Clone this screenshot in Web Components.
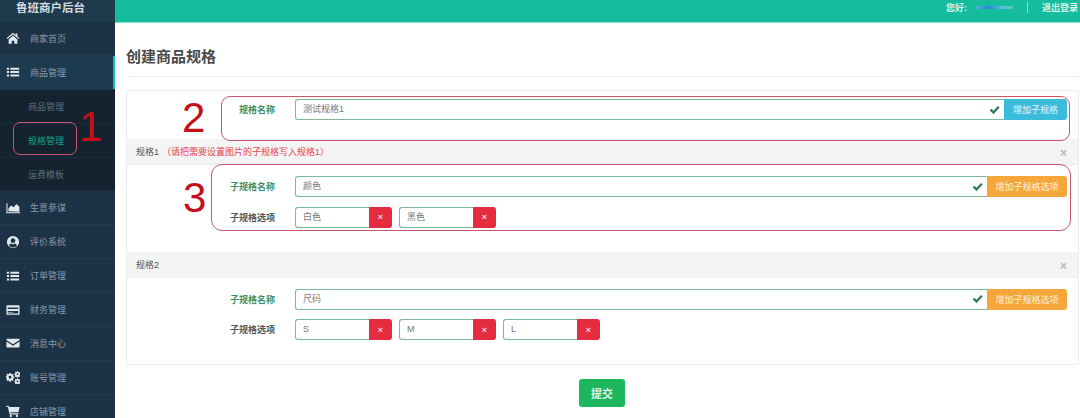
<!DOCTYPE html>
<html lang="zh">
<head>
<meta charset="utf-8">
<title>创建商品规格</title>
<style>
  html, body { margin: 0; height: 418px; overflow: hidden; background: #fff; }
  body { font-family: "Liberation Sans", "Noto Sans CJK SC", sans-serif; font-size: 9px; color: #555; }
</style>
</head>
<body>
<shop-page>
  <side-nav slot="nav" brand="鲁班商户后台">
    <nav-item icon="home">商家首页</nav-item>
    <nav-item icon="list" current>商品管理</nav-item>
    <nav-item sub>商品管理</nav-item>
    <nav-item sub active>规格管理</nav-item>
    <nav-item sub>运费模板</nav-item>
    <nav-item icon="chart">生意参谋</nav-item>
    <nav-item icon="user">评价系统</nav-item>
    <nav-item icon="list">订单管理</nav-item>
    <nav-item icon="card">财务管理</nav-item>
    <nav-item icon="mail">消息中心</nav-item>
    <nav-item icon="cogs">账号管理</nav-item>
    <nav-item icon="cart">店铺管理</nav-item>
  </side-nav>
  <top-bar slot="top"></top-bar>
  <spec-form>
    <spec-section>
      <spec-row label="规格名称" valid>
        <spec-field valid action="增加子规格" tone="blue">测试规格1</spec-field>
      </spec-row>
    </spec-section>
    <spec-section heading="规格1" note="（请把需要设置图片的子规格写入规格1）" closable>
      <spec-row label="子规格名称" valid>
        <spec-field valid action="增加子规格选项" tone="orange">颜色</spec-field>
      </spec-row>
      <spec-row label="子规格选项">
        <spec-option>白色</spec-option>
        <spec-option>黑色</spec-option>
      </spec-row>
    </spec-section>
    <spec-section heading="规格2" closable>
      <spec-row label="子规格名称" valid>
        <spec-field valid action="增加子规格选项" tone="orange">尺码</spec-field>
      </spec-row>
      <spec-row label="子规格选项">
        <spec-option>S</spec-option>
        <spec-option>M</spec-option>
        <spec-option>L</spec-option>
      </spec-row>
    </spec-section>
  </spec-form>
  <call-out slot="notes" n="1" style="--x:13px;--y:122px;--w:64px;--h:33px;--r:7px;--nx:79px;--ny:104px"></call-out>
  <call-out slot="notes" n="2" style="--x:221px;--y:96px;--w:849px;--h:45px;--r:9px;--nx:182px;--ny:95px"></call-out>
  <call-out slot="notes" n="3" style="--x:211px;--y:164px;--w:860px;--h:67px;--r:11px;--nx:183px;--ny:175px"></call-out>
</shop-page>

<script>
// fa-ish icon shapes, 16x16 box
const ICONS = {
  home: '<path d="M8 2 .6 8.2l.9 1L8 3.9l6.5 5.3.9-1L13 6.200V2.800h-2v1.700zM3 9.600V14.500h3.500v-3.500h3v3.500H13V9.600L8 5.500z"/>',
  list: '<path d="M1 3h2.500v2.300H1zM5 3h10v2.300H5zM1 6.900h2.500v2.300H1zM5 6.900h10v2.300H5zM1 10.800h2.500v2.300H1zM5 10.800h10v2.300H5z"/>',
  chart: '<path d="M.5 2.500h1.200v10.300H16V14H.5zM2.800 11.800V8.500l3-3.500 3 2 3-3.500 3.500 3v5.800z"/>',
  user: '<path fill-rule="evenodd" d="M8 1a7 7 0 1 1 0 14A7 7 0 0 1 8 1zm0 2.800a2.700 2.700 0 1 0 0 5.400 2.700 2.700 0 0 0 0-5.400zM3.500 12.200a6 6 0 0 0 9 0c-.4-1.400-1.200-2.300-2.300-2.500a3.600 3.600 0 0 1-4.400 0c-1.100.2-1.900 1.100-2.300 2.500z"/>',
  card: '<path fill-rule="evenodd" d="M1.500 2.500h13c.6 0 1 .4 1 1v9c0 .6-.4 1-1 1h-13c-.6 0-1-.4-1-1v-9c0-.6.4-1 1-1zM2 5v1.800h12V5zm0 4.200v2.800h12V9.200zm.8 1.300h2.400v.8H2.800zm3.200 0h1.600v.8H6z"/>',
  mail: '<path d="M1.300 3h13.400c.5 0 .8.300.8.800v.7L8 9.300.5 4.500v-.7c0-.5.300-.8.800-.8zM.5 6.200 8 11l7.500-4.800v6c0 .5-.3.800-.8.800H1.300c-.5 0-.8-.3-.8-.8z"/>',
  cogs: '<path fill-rule="evenodd" d="M5.600 4.500l1 .4.9-.7 1.200 1.200-.7.900.4 1 1.100.2v1.700l-1.100.2-.4 1 .7.900-1.200 1.200-.9-.7-1 .4-.2 1.100H3.700l-.2-1.100-1-.4-.9.700L.4 11.200l.7-.9-.4-1L-.4 9.100V7.400l1.100-.2.4-1-.7-.9 1.200-1.200.9.700 1-.4.2-1.100h1.700zM4.600 6.700a1.600 1.600 0 1 0 0 3.200 1.600 1.600 0 0 0 0-3.200zM12.600 1.500h1.100l.2.800.7.300.7-.4.700.8-.4.700.2.700.8.200v1.100l-.8.2-.2.700.4.700-.7.800-.7-.4-.7.300-.2.800h-1.100l-.2-.8-.7-.3-.7.400-.8-.8.400-.7-.3-.7-.8-.2V4.400l.8-.2.3-.7-.4-.7.8-.8.700.4.7-.3zm.5 2.300a1 1 0 1 0 0 2 1 1 0 0 0 0-2zM12.600 9.600h1.100l.2.800.7.300.7-.4.700.8-.4.700.2.700.8.200v1.100l-.8.2-.2.700.4.700-.7.800-.7-.4-.7.300-.2.800h-1.100l-.2-.8-.7-.3-.7.400-.8-.8.400-.7-.3-.7-.8-.2v-1.100l.8-.2.3-.7-.4-.7.8-.8.700.4.7-.3zm.5 2.300a1 1 0 1 0 0 2 1 1 0 0 0 0-2z"/>',
  cart: '<path d="M.5 2h2.600l.4 1.500H15.500l-1.300 6H5l.3 1.200h8.900V12H4.100L2.200 3.300H.5z"/><circle cx="5.500" cy="13.700" r="1.300"/><circle cx="12.500" cy="13.700" r="1.300"/>',
};

class ShopPage extends HTMLElement {
  constructor () {
    super();
    this.attachShadow({mode: 'open'}).innerHTML = `
      <style>
        :host { display: grid; grid-template-columns: 115px 1fr; grid-template-rows: 23px 1fr; width: 1080px; height: 418px; overflow: hidden; position: relative; }
        .nav { grid-row: 1 / 3; }
        .title { margin: 0 1px 0 11px; height: 54px; border-bottom: 1px solid #f0f0f0; display: flex; align-items: center; padding-top: 14px; box-sizing: border-box; font-size: 15px; line-height: 20px; font-weight: 700; color: #4a4a4a; }
        main { min-width: 0; }
      </style>
      <div class="nav"><slot name="nav"></slot></div>
      <slot name="top"></slot>
      <main>
        <div class="title">创建商品规格</div>
        <slot></slot>
      </main>
      <slot name="notes"></slot>`;
  }
}

class SideNav extends HTMLElement {
  constructor () {
    super();
    this.attachShadow({mode: 'open'}).innerHTML = `
      <style>
        :host { display: block; height: 418px; background: #1c3347; overflow: hidden; }
        .brand { height: 22px; background: #1e3a4c; color: #d5dde2; font-size: 11.500px; font-weight: 700; line-height: 16px; padding-left: 16px; box-sizing: border-box; }
      </style>
      <div class="brand"></div>
      <slot></slot>`;
    this.shadowRoot.querySelector('.brand').textContent = this.getAttribute('brand');
  }
}

class NavItem extends HTMLElement {
  constructor () {
    super();
    const name = this.getAttribute('icon');
    this.attachShadow({mode: 'open'}).innerHTML = `
      <style>
        :host { display: flex; align-items: center; height: 33.900px; box-sizing: border-box; padding-left: 6px; gap: 10px; color: #8b9aa6; border-bottom: 1px solid #213a4d; }
        :host([current]) { background: #1d3a4e; box-shadow: inset -2px 0 0 #19bc9c; }
        :host([sub]) { background: #14232f; padding-left: 28px; border-bottom-color: #1a2c3a; color: #5f6e79; }
        :host([active]) { color: #16a085; }
        svg { width: 14px; height: 14px; fill: #e3e8ec; flex: none; }
      </style>
      ${name ? `<svg viewBox="0 0 16 16">${ICONS[name]}</svg>` : ''}
      <slot></slot>`;
  }
}

class TopBar extends HTMLElement {
  constructor () {
    super();
    this.attachShadow({mode: 'open'}).innerHTML = `
      <style>
        :host { display: flex; align-items: center; justify-content: flex-end; height: 23px; box-sizing: border-box; background: #16bc9e; border-bottom: 1px solid #7fe3d6; color: #d8f3ee; font-size: 9px; font-weight: 700; padding: 0 2px 8px 0; }
        .who { width: 37px; height: 3px; margin: 0 14px 0 9px; border-radius: 2px; background: linear-gradient(90deg, #4fb6d6, #2a86cf 35%, #57bfd4 70%, #5cc6cf); }
        .sep { width: 1px; height: 11px; background: #7fe3d6; margin-right: 14px; }
      </style>
      <span>您好:</span><span class="who"></span><span class="sep"></span><span>退出登录</span>`;
  }
}

class SpecForm extends HTMLElement {
  constructor () {
    super();
    this.attachShadow({mode: 'open'}).innerHTML = `
      <style>
        :host { display: block; padding: 13px 1px 0 11px; }
        .panel { border: 1px solid #ececec; border-radius: 2px; height: 275px; box-sizing: border-box; }
        .foot { display: flex; justify-content: center; margin-top: 14px; padding-right: 1px; }
        button { width: 46px; height: 28px; border: 0; border-radius: 3px; background: #1cb65c; color: #e4f6ea; font: 700 11px "Liberation Sans", "Noto Sans CJK SC", sans-serif; padding: 0; }
      </style>
      <div class="panel"><slot></slot></div>
      <div class="foot"><button type="button">提交</button></div>`;
  }
}

class SpecSection extends HTMLElement {
  constructor () {
    super();
    const heading = this.getAttribute('heading');
    const note = this.getAttribute('note') || '';
    this.attachShadow({mode: 'open'}).innerHTML = `
      <style>
        :host { display: block; }
        header { display: flex; align-items: center; height: 26px; box-sizing: border-box; padding: 0 11px 0 9px; background: #f4f4f4; border-bottom: 1px solid #ededed; color: #555; }
        .note { color: #e8434f; margin-left: 3px; }
        .close { margin-left: auto; color: #b9b9b9; font-size: 12px; line-height: 12px; font-weight: 700; padding-top: 3px; }
        .body { display: flex; flex-direction: column; gap: 9.500px; padding: 11px 11px 24px 0; }
        :host(:first-child) .body { padding-top: 8px; padding-bottom: 19px; }
      </style>
      ${heading ? `<header><span>${heading}</span><span class="note">${note}</span><span class="close">×</span></header>` : ''}
      <div class="body"><slot></slot></div>`;
  }
}

class SpecRow extends HTMLElement {
  constructor () {
    super();
    this.attachShadow({mode: 'open'}).innerHTML = `
      <style>
        :host { display: grid; grid-template-columns: 148px 1fr; column-gap: 20px; align-items: center; }
        label { text-align: right; font-weight: 700; color: #555; }
        :host([valid]) label { color: #3f8f60; }
        .controls { display: flex; gap: 7px; min-width: 0; }
      </style>
      <label></label>
      <div class="controls"><slot></slot></div>`;
    this.shadowRoot.querySelector('label').textContent = this.getAttribute('label');
  }
}

class SpecField extends HTMLElement {
  constructor () {
    super();
    const tone = this.getAttribute('tone');
    const action = this.getAttribute('action');
    this.attachShadow({mode: 'open'}).innerHTML = `
      <style>
        :host { display: flex; flex: 1; height: 21px; color: #777; min-width: 0; }
        .box { flex: 1; display: flex; align-items: center; padding: 0 4px 2px 7px; border: 1px solid #7fb89a; border-right: 0; border-radius: 3px 0 0 3px; box-sizing: border-box; min-width: 0; }
        svg { width: 11px; height: 10px; margin-left: auto; margin-top: 2px; fill: #2f7d57; }
        button { border: 0; padding: 0; height: 21px; border-radius: 0 3px 3px 0; color: #e8f5f8; font: 9px "Liberation Sans", "Noto Sans CJK SC", sans-serif; }
        .blue { width: 63px; background: #3bbcdc; }
        .orange { width: 80px; background: #f6a73a; color: #fdf0dc; }
      </style>
      <div class="box"><span><slot></slot></span><svg viewBox="0 0 16 14"><path d="M1 7.500 3.500 5l3 3L13 1l2.500 2.500-9 9.500z"/></svg></div>
      <button type="button" class="${tone}">${action}</button>`;
  }
}

class SpecOption extends HTMLElement {
  constructor () {
    super();
    this.attachShadow({mode: 'open'}).innerHTML = `
      <style>
        :host { display: flex; width: 97px; height: 21px; color: #777; }
        .box { flex: 1; display: flex; align-items: center; padding: 0 0 2px 7px; border: 1px solid #7fb89a; border-right: 0; border-radius: 3px 0 0 3px; box-sizing: border-box; }
        button { width: 23px; height: 21px; padding: 0; border: 0; border-radius: 0 3px 3px 0; background: #e42c3f; color: #f6d5d9; font: 700 9px "Liberation Sans", sans-serif; }
      </style>
      <div class="box"><slot></slot></div>
      <button type="button">×</button>`;
  }
}

// red hand-drawn style marks lying over the screenshot
class CallOut extends HTMLElement {
  constructor () {
    super();
    this.attachShadow({mode: 'open'}).innerHTML = `
      <style>
        :host { display: contents; }
        .ring { position: absolute; left: var(--x); top: var(--y); width: var(--w); height: var(--h); border: 1.500px solid #c9566a; border-radius: var(--r); box-sizing: border-box; pointer-events: none; }
        .num { position: absolute; left: var(--nx); top: var(--ny); color: #c4101a; font: 42px/46px "Liberation Sans", sans-serif; }
      </style>
      <div class="ring"></div><div class="num">${this.getAttribute('n')}</div>`;
  }
}

customElements.define('shop-page', ShopPage);
customElements.define('side-nav', SideNav);
customElements.define('nav-item', NavItem);
customElements.define('top-bar', TopBar);
customElements.define('spec-form', SpecForm);
customElements.define('spec-section', SpecSection);
customElements.define('spec-row', SpecRow);
customElements.define('spec-field', SpecField);
customElements.define('spec-option', SpecOption);
customElements.define('call-out', CallOut);
</script>
</body>
</html>
